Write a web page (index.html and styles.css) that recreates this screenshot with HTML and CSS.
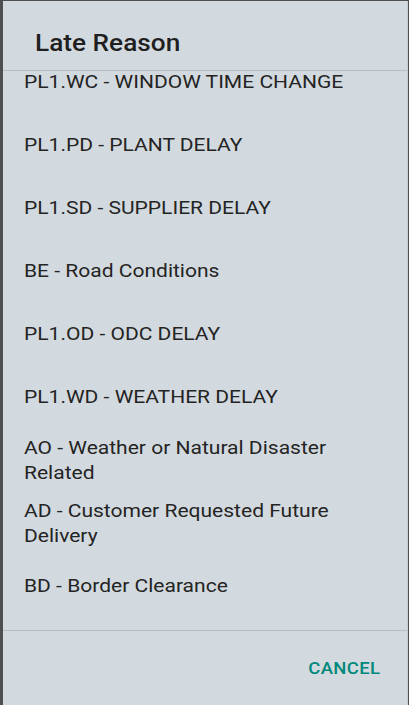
FILE: index.html
```html
<!DOCTYPE html>
<html>
<head>
<meta charset="utf-8">
<link rel="stylesheet" href="styles.css">
</head>
<body>
<div class="backdrop">
  <div class="dialog">
    <div class="header"><h1 class="title"><span class="wide">Late Reason</span></h1></div>
    <div class="list">
      <ul class="items">
        <li class="item"><span class="label">PL1.WC - WINDOW TIME CHANGE</span></li>
        <li class="item"><span class="label">PL1.PD - PLANT DELAY</span></li>
        <li class="item"><span class="label">PL1.SD - SUPPLIER DELAY</span></li>
        <li class="item"><span class="label">BE - Road Conditions</span></li>
        <li class="item"><span class="label">PL1.OD - ODC DELAY</span></li>
        <li class="item"><span class="label">PL1.WD - WEATHER DELAY</span></li>
        <li class="item"><span class="label">AO - Weather or Natural Disaster Related</span></li>
        <li class="item"><span class="label">AD - Customer Requested Future Delivery</span></li>
        <li class="item"><span class="label">BD - Border Clearance</span></li>
      </ul>
    </div>
    <div class="footer"><button class="cancel"><span class="wide-r">CANCEL</span></button></div>
  </div>
</div>
</body>
</html>
```
FILE: styles.css
```css
html, body {
  margin: 0;
  padding: 0;
  height: 100%;
}
body {
  background: #4f4f4f;
  font-family: Roboto, "Noto Sans", sans-serif;
  overflow: hidden;
}
.backdrop {
  height: 705px;
  padding: 1px 2px 0 3px;
  box-sizing: border-box;
  display: flex;
}
.dialog {
  flex: 1;
  background: #d3dadf;
  display: flex;
  flex-direction: column;
  box-shadow: 1px 0 0 #c5ccd1;
}
.header {
  height: 69px;
  border-bottom: 1px solid #b8bfc3;
  padding-left: 32px;
  display: flex;
  align-items: flex-start;
}
.title {
  margin: 0;
  padding-top: 30px;
  font-size: 23px;
  line-height: 26px;
  font-weight: 500;
  color: #1f1f1f;
}
.wide {
  display: inline-block;
  transform: scaleX(1.14);
  transform-origin: left center;
}
.wide-r {
  display: inline-block;
  transform: scaleX(1.12);
  transform-origin: right center;
}
.list {
  flex: 1;
  overflow: hidden;
  border-bottom: 1px solid #b8bfc3;
}
.items {
  list-style: none;
  margin: -20px 0 0 0;
  padding: 0;
}
.item {
  min-height: 63px;
  display: flex;
  align-items: center;
  padding: 0 20px 0 21px;
  font-size: 18.7px;
  line-height: 25px;
  color: #242424;
  box-sizing: border-box;
}
.label {
  display: block;
  width: 300px;
  transform: scaleX(1.125);
  transform-origin: left center;
}
.footer {
  height: 74px;
  display: flex;
  justify-content: flex-end;
  align-items: center;
  padding-right: 27px;
}
.cancel {
  background: none;
  border: 0;
  padding: 0;
  font-family: Roboto, "Noto Sans", sans-serif;
  font-size: 16.5px;
  font-weight: 500;
  color: #00897b;
  letter-spacing: 0.3px;
  margin-top: 1px;
}
```
